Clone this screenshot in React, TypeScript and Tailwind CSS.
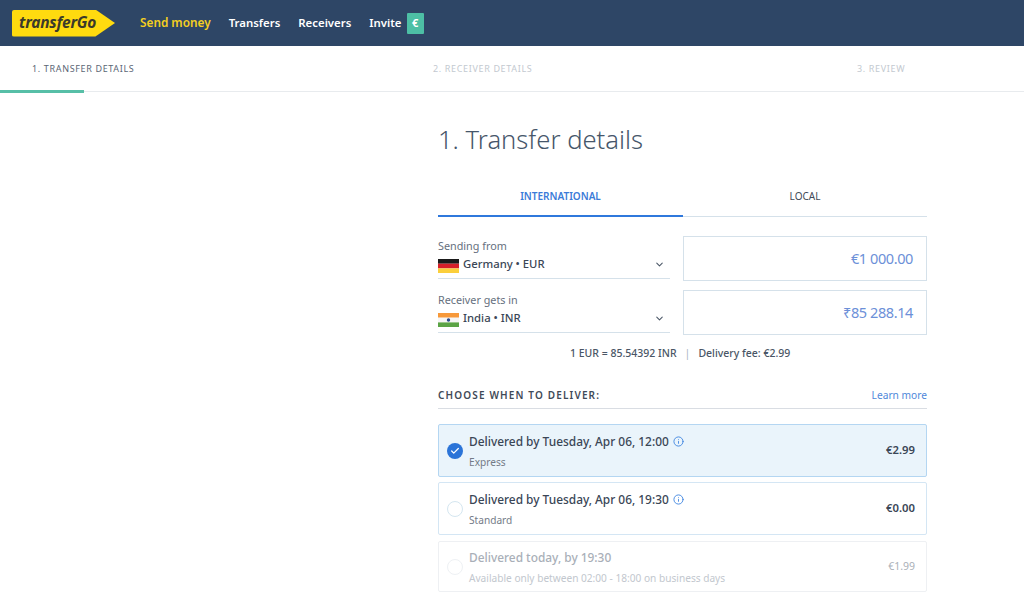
import { ChevronDown, Check, Info } from 'lucide-react'

const sans = 'font-["Noto_Sans","Open_Sans",sans-serif]'

function GermanyFlag() {
  return (
    <svg width="21" height="14" viewBox="0 0 21 14" className="shrink-0 mt-[4px]">
      <rect width="21" height="4.7" y="0" fill="#1a1a1a" />
      <rect width="21" height="4.7" y="4.7" fill="#d6202a" />
      <rect width="21" height="4.6" y="9.4" fill="#fbcf3c" />
    </svg>
  )
}

function IndiaFlag() {
  return (
    <svg width="21" height="14" viewBox="0 0 21 14" className="shrink-0 mt-[4px]">
      <rect width="21" height="4.7" y="0" fill="#f7993a" />
      <rect width="21" height="4.7" y="4.7" fill="#f6f6f6" />
      <rect width="21" height="4.6" y="9.4" fill="#5ba445" />
      <circle cx="10.5" cy="7" r="1.7" fill="#2a4a8c" />
    </svg>
  )
}

function CurrencyRow({ label, flag, name, amount }: { label: string; flag: React.ReactNode; name: string; amount: string }) {
  return (
    <div className="flex h-[45px] gap-[13px]">
      <div className="w-[232px] h-[43px] border-b border-[#d5e1ea] flex flex-col">
        <div className="text-[10.8px] leading-[15px] mt-[2px] text-[#66707e]">{label}</div>
        <div className="flex items-center h-[22px]">
          {flag}
          <span className="ml-[4px] text-[11.3px] font-medium text-[#3a4656]">{name}</span>
          <ChevronDown className="ml-auto mr-[5px] text-[#4a5666]" size={11} strokeWidth={2.25} />
        </div>
      </div>
      <div className="flex-1 border border-[#d5e1ea] flex items-center justify-end pr-[13px] text-[14.5px] tracking-[-0.4px] text-[#6c90d8]">
        {amount}
      </div>
    </div>
  )
}

function DeliveryOption({
  title,
  sub,
  price,
  state,
  hasInfo,
  h,
}: {
  title: string
  sub: string
  price: string
  state: 'selected' | 'idle' | 'disabled'
  hasInfo?: boolean
  h: string
}) {
  const box =
    state === 'selected'
      ? 'bg-[#eaf4fb] border-[#b4d6f2]'
      : state === 'idle'
        ? 'bg-white border-[#d4e6f4]'
        : 'bg-white border-[#eef0f3]'
  const dim = state === 'disabled'
  return (
    <div className={`${h} border rounded-[2px] flex items-center pl-[8px] pr-[11px] ${box}`}>
      {state === 'selected' ? (
        <div className="w-[16px] h-[16px] rounded-full bg-[#2b74d8] flex items-center justify-center shrink-0">
          <Check size={10} strokeWidth={3} className="text-white" />
        </div>
      ) : (
        <div className={`w-[16px] h-[16px] rounded-full border shrink-0 ${dim ? 'border-[#eef1f4]' : 'border-[#d4e6f0]'}`} />
      )}
      <div className="ml-[6px] flex flex-col">
        <div className={`flex items-center text-[11.9px] leading-[16px] font-medium ${dim ? 'text-[#a9afb8]' : 'text-[#3a4656]'}`}>
          {title}
          {hasInfo && <Info size={11} strokeWidth={2} className="ml-[4px] mt-[2px] text-[#3f86e0]" />}
        </div>
        <div className={`text-[10.15px] leading-[14px] mt-[6px] ${dim ? 'text-[#c2c7ce]' : 'text-[#737b87]'}`}>{sub}</div>
      </div>
      <div className={`ml-auto ${dim ? 'text-[10.5px] text-[#aab0b8] font-normal' : 'text-[11.3px] text-[#3a4656] font-semibold'}`}>{price}</div>
    </div>
  )
}

export default function App() {
  return (
    <div className={`w-[1024px] h-[604px] overflow-hidden bg-white ${sans}`}>
      <nav className="h-[46px] bg-[#2e4666] flex items-center pl-[12px]">
        <div className="w-[103px] h-[27px] bg-[#ffdb0f] rounded-l-[2px] [clip-path:polygon(0_0,81%_0,100%_50%,81%_100%,0_100%)] flex items-center pl-[7px] shrink-0">
          <span className="italic font-bold text-[15.5px] tracking-[-0.2px] text-[#3b3a2a]">transferGo</span>
        </div>
        <span className="ml-[25px] text-[11.8px] font-semibold text-[#f5cf1f]">Send money</span>
        <span className="ml-[18px] text-[11.4px] font-semibold text-white">Transfers</span>
        <span className="ml-[18px] text-[11.4px] font-semibold text-white">Receivers</span>
        <span className="ml-[18px] text-[11.4px] font-semibold text-white">Invite</span>
        <span className="ml-[5px] w-[17px] h-[21px] bg-[#4dbfa5] rounded-[1px] flex items-center justify-center text-white text-[11px] font-bold">€</span>
      </nav>

      <div className="h-[46px] border-b border-[#e8ebee] relative flex items-center text-[9px] tracking-[0.65px]">
        <span className="ml-[32px] w-[401px] text-[#5b6675]">1. TRANSFER DETAILS</span>
        <span className="w-[424px] text-[#c3c9d0]">2. RECEIVER DETAILS</span>
        <span className="text-[#c3c9d0]">3. REVIEW</span>
        <div className="absolute left-0 bottom-[-2px] w-[84px] h-[3px] bg-[#57bfa7]" />
      </div>

      <main className="ml-[438px] w-[489px]">
        <h1 className="mt-[30px] text-[25.6px] leading-[36px] font-light text-[#46566a]">1. Transfer details</h1>

        <div className="mt-[18px] flex h-[41px] text-[10px]">
          <div className="w-[245px] border-b-2 border-[#2f78dc] flex items-center justify-center pt-[1px] font-semibold text-[#3b7bd8]">INTERNATIONAL</div>
          <div className="flex-1 border-b border-[#d5e1ea] flex items-center justify-center text-[#3f4a58]">LOCAL</div>
        </div>

        <div className="mt-[19px] flex flex-col gap-[9px]">
          <CurrencyRow label="Sending from" flag={<GermanyFlag />} name="Germany • EUR" amount="€1 000.00" />
          <CurrencyRow label="Receiver gets in" flag={<IndiaFlag />} name="India • INR" amount="₹85 288.14" />
        </div>

        <div className="mt-[11px] ml-[132px] text-[10.5px] leading-[15px] font-medium text-[#4a5666] flex">
          <span>1 EUR = 85.54392 INR</span>
          <span className="mx-[8px] font-normal text-[#a9b4c0]">|</span>
          <span>Delivery fee: €2.99</span>
        </div>

        <div className="mt-[27px] h-[21px] border-b border-[#d9dde3] flex justify-between items-start">
          <span className="text-[10px] leading-[14px] font-semibold tracking-[1.15px] text-[#3f4a58]">CHOOSE WHEN TO DELIVER:</span>
          <span className="text-[10.2px] leading-[14px] text-[#4f88da]">Learn more</span>
        </div>

        <div className="mt-[15px] flex flex-col">
          <DeliveryOption h="h-[53px]" state="selected" hasInfo title="Delivered by Tuesday, Apr 06, 12:00" sub="Express" price="€2.99" />
          <div className="h-[5px]" />
          <DeliveryOption h="h-[53px]" state="idle" hasInfo title="Delivered by Tuesday, Apr 06, 19:30" sub="Standard" price="€0.00" />
          <div className="h-[6px]" />
          <DeliveryOption h="h-[51px]" state="disabled" title="Delivered today, by 19:30" sub="Available only between 02:00 - 18:00 on business days" price="€1.99" />
        </div>
      </main>
    </div>
  )
}
